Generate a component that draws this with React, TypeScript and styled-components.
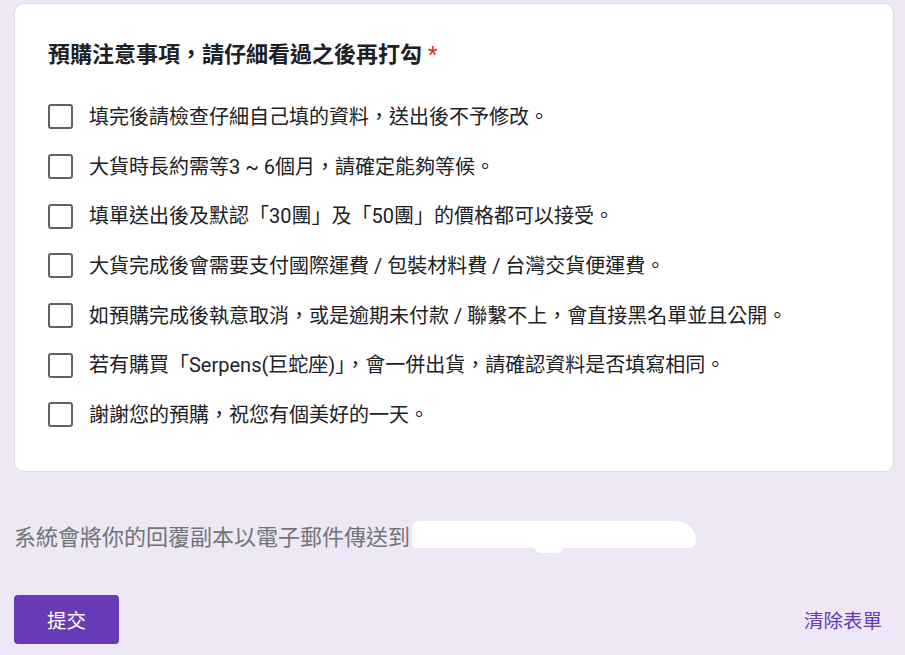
import React from "react";
import styled, { createGlobalStyle } from "styled-components";

const Global = createGlobalStyle`
  html, body { margin: 0; padding: 0; background: #ede7f6; }
  body { font-family: Roboto, "Noto Sans CJK TC", "Liberation Sans", sans-serif; }
`;

const Page = styled.div`
  width: 905px;
  height: 655px;
  box-sizing: border-box;
  padding: 3px 11px 0 14px;
  display: flex;
  flex-direction: column;
  overflow: hidden;
`;

const Card = styled.div`
  background: #fff;
  border: 1px solid #dadce0;
  border-radius: 10px;
  padding: 36px 33px 31px 33px;
  box-sizing: border-box;
  display: flex;
  flex-direction: column;
`;

const Title = styled.div`
  font-size: 22px;
  line-height: 30px;
  font-weight: 700;
  color: #202124;
`;

const Required = styled.span`
  color: #d93025;
  margin-left: 6px;
  font-weight: 400;
`;

const List = styled.div`
  margin-top: 22px;
  display: flex;
  flex-direction: column;
`;

const Row = styled.label`
  height: 49.7px;
  display: flex;
  align-items: center;
  gap: 16px;
`;

const Box = styled.span`
  width: 25px;
  height: 25px;
  box-sizing: border-box;
  border: 2.5px solid #5f6368;
  border-radius: 3px;
  flex: none;
`;

const OptionText = styled.span`
  font-size: 20px;
  line-height: 28px;
  color: #202124;
`;

const Notice = styled.div`
  margin-top: 49px;
  display: flex;
  align-items: center;
  height: 28px;
  font-size: 22px;
  color: #70757a;
`;

const Redact = styled.span`
  position: relative;
  display: inline-block;
  width: 284px;
  height: 27px;
  margin-left: 2px;
  background: #fff;
  border-radius: 14px 40px 14px 10px;
  &::after {
    content: "";
    position: absolute;
    left: 122px;
    top: 18px;
    width: 30px;
    height: 14px;
    background: #fff;
    border-radius: 8px;
  }
`;

const Actions = styled.div`
  margin-top: 46px;
  display: flex;
  align-items: center;
  justify-content: space-between;
  padding-right: 12px;
`;

const Submit = styled.button`
  width: 105px;
  height: 49px;
  border: none;
  border-radius: 4px;
  background: #673ab7;
  color: #fff;
  font-family: inherit;
  font-size: 19.5px;
  cursor: pointer;
`;

const Clear = styled.span`
  color: #673ab7;
  font-size: 19.5px;
`;

const options = [
  "填完後請檢查仔細自己填的資料，送出後不予修改。",
  "大貨時長約需等3 ~ 6個月，請確定能夠等候。",
  "填單送出後及默認「30團」及「50團」的價格都可以接受。",
  "大貨完成後會需要支付國際運費 / 包裝材料費 / 台灣交貨便運費。",
  "如預購完成後執意取消，或是逾期未付款 / 聯繫不上，會直接黑名單並且公開。",
  "若有購買「Serpens(巨蛇座)」，會一併出貨，請確認資料是否填寫相同。",
  "謝謝您的預購，祝您有個美好的一天。",
];

export default function App() {
  return (
    <>
      <Global />
      <Page>
        <Card>
          <Title>
            預購注意事項，請仔細看過之後再打勾<Required>*</Required>
          </Title>
          <List>
            {options.map((o) => (
              <Row key={o}>
                <Box />
                <OptionText>{o}</OptionText>
              </Row>
            ))}
          </List>
        </Card>
        <Notice>
          系統會將你的回覆副本以電子郵件傳送到<Redact />
        </Notice>
        <Actions>
          <Submit>提交</Submit>
          <Clear>清除表單</Clear>
        </Actions>
      </Page>
    </>
  );
}
